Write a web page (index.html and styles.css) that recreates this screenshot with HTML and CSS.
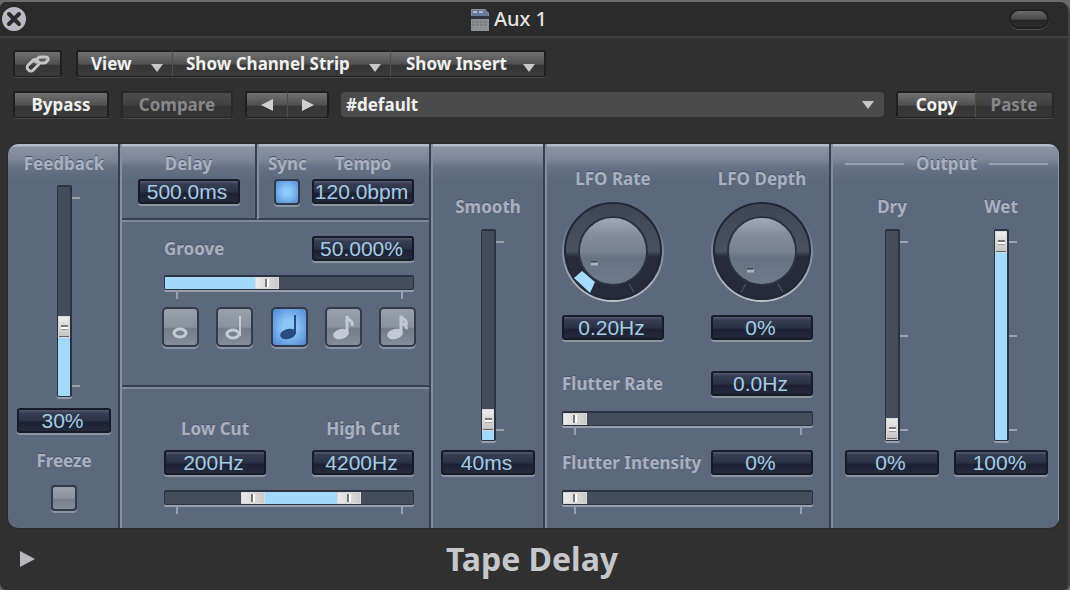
FILE: index.html
```html
<!DOCTYPE html>
<html lang="en">
  <head>
    <meta charset="UTF-8" />
    <meta name="viewport" content="width=device-width, initial-scale=1.0" />
    <title>Aux 1 - Tape Delay</title>
    <link rel="stylesheet" href="styles.css">
  </head>
  <body>
    <main class="window">
      <header class="titlebar">
        <button class="close" type="button" aria-label="Close">
          <svg width="26" height="26" viewBox="0 0 26 26">
            <circle cx="13" cy="13" r="12" fill="#b9bac4" />
            <path d="M8 8l10 10M18 8L8 18" stroke="#2b2b2b" stroke-width="4" stroke-linecap="round" />
          </svg>
        </button>
        <h1 class="title">
          <svg width="18" height="23" viewBox="0 0 18 23">
            <path d="M0 1h14l4 4v18H0z" fill="#8d8f93" />
            <path d="M1 2h13l3 3v3H1z" fill="#66799a" />
            <path d="M2 3h4v2H2zM8 3h4v2H8z" fill="#a9b9d0" />
            <path d="M0 8h18v3H0z" fill="#30343c" />
            <path d="M1 14h16M1 17h16" stroke="#6a6c70" stroke-width="1" stroke-dasharray="3 1" />
          </svg>
          Aux 1
        </h1>
        <button class="pill" type="button" aria-label="Toggle toolbar"></button>
      </header>

      <div class="toolbar">
        <div class="row">
          <button class="btn link" type="button" aria-label="Link">
            <svg width="26" height="20" viewBox="0 0 26 20" fill="none" stroke="#c4c4c4" stroke-width="3">
              <rect x="2" y="8" width="13" height="7" rx="3" transform="rotate(-45 8 12)" />
              <path d="M10 9l3-5q1-1 3-1h4q4 0 3 3l-1 1q-1 2-3 2h-5" />
            </svg>
          </button>
          <div class="group">
            <button class="btn menu view" type="button" aria-haspopup="menu">View <i class="down"></i></button>
            <button class="btn menu strip" type="button" aria-haspopup="menu">Show Channel Strip <i class="down"></i></button>
            <button class="btn menu insert" type="button" aria-haspopup="menu">Show Insert <i class="down"></i></button>
          </div>
        </div>
        <div class="row">
          <button class="btn bypass" type="button">Bypass</button>
          <button class="btn compare" type="button" disabled>Compare</button>
          <div class="group">
            <button class="btn arrow" type="button" aria-label="Previous setting"><i class="left"></i></button>
            <button class="btn arrow" type="button" aria-label="Next setting"><i class="right"></i></button>
          </div>
          <div class="preset">
            <select aria-label="Setting">
              <option>#default</option>
            </select>
            <i class="down"></i>
          </div>
          <div class="group">
            <button class="btn copy" type="button">Copy</button>
            <button class="btn copy" type="button" disabled>Paste</button>
          </div>
        </div>
      </div>

      <section class="panel">
        <div class="col feedback">
          <label for="feedback">Feedback</label>
          <div class="fader">
            <input type="range" aria-label="Feedback level" value="31" style="--v: 31%" />
            <div class="ticks"><i></i><i></i></div>
          </div>
          <input class="value" type="text" id="feedback" value="30%" />
          <label class="freeze" for="freeze">Freeze</label>
          <input class="check" type="checkbox" id="freeze" />
        </div>

        <div class="col timing">
          <div class="cell delay">
            <label for="delay">Delay</label>
            <input class="value" type="text" id="delay" value="500.0ms" />
          </div>
          <div class="cell tempo">
            <div class="field">
              <label for="sync">Sync</label>
              <input class="check" type="checkbox" id="sync" checked />
            </div>
            <div class="field">
              <label for="tempo">Tempo</label>
              <input class="value" type="text" id="tempo" value="120.0bpm" />
            </div>
          </div>
          <div class="cell groove">
            <div class="line">
              <label for="groove">Groove</label>
              <input class="value" type="text" id="groove" value="50.000%" />
            </div>
            <div class="slider">
              <input type="range" aria-label="Groove amount" value="40" style="--v: 40%" />
            </div>
            <div class="ticks"><i></i><i></i></div>
            <div class="notes">
              <label class="note">
                <input type="radio" name="note" aria-label="Whole note" />
                <svg viewBox="2 1 33 36">
                  <ellipse cx="18" cy="25" rx="6" ry="4" fill="none" stroke="currentColor" stroke-width="3" />
                </svg>
              </label>
              <label class="note">
                <input type="radio" name="note" aria-label="Half note" />
                <svg viewBox="2 1 33 36">
                  <ellipse cx="17" cy="26" rx="6" ry="4" fill="none" stroke="currentColor" stroke-width="3" />
                  <path d="M24 28V8" stroke="currentColor" stroke-width="2" />
                </svg>
              </label>
              <label class="note">
                <input type="radio" name="note" aria-label="Quarter note" checked />
                <svg viewBox="2 1 33 36">
                  <ellipse cx="17" cy="26" rx="8" ry="5" fill="currentColor" transform="rotate(-15 17 26)" />
                  <path d="M24 26V7" stroke="currentColor" stroke-width="2" />
                </svg>
              </label>
              <label class="note">
                <input type="radio" name="note" aria-label="Eighth note" />
                <svg viewBox="2 1 33 36">
                  <ellipse cx="16" cy="26" rx="8" ry="5" fill="currentColor" transform="rotate(-15 16 26)" />
                  <path d="M22 25V8q1 4 4 5 2 2 1 5" fill="none" stroke="currentColor" stroke-width="3" />
                </svg>
              </label>
              <label class="note">
                <input type="radio" name="note" aria-label="Sixteenth note" />
                <svg viewBox="2 1 33 36">
                  <ellipse cx="16" cy="26" rx="8" ry="5" fill="currentColor" transform="rotate(-15 16 26)" />
                  <path d="M22 25V8q1 3 4 4 2 2 1 5M22 13q1 3 4 4 2 2 1 4" fill="none" stroke="currentColor" stroke-width="3" />
                </svg>
              </label>
            </div>
          </div>
          <div class="cell filter">
            <div class="line">
              <div class="field">
                <label for="low">Low Cut</label>
                <input class="value" type="text" id="low" value="200Hz" />
              </div>
              <div class="field">
                <label for="high">High Cut</label>
                <input class="value" type="text" id="high" value="4200Hz" />
              </div>
            </div>
            <div class="slider double" style="--a: 35%; --b: 74%">
              <input type="range" aria-label="Low cut frequency" value="34" />
              <input type="range" aria-label="High cut frequency" value="77" />
            </div>
            <div class="ticks"><i></i><i></i></div>
          </div>
        </div>

        <div class="col smooth">
          <label for="smooth">Smooth</label>
          <div class="fader">
            <input type="range" aria-label="Smooth time" value="5" style="--v: 6%" />
            <div class="ticks"><i></i><i></i></div>
          </div>
          <input class="value" type="text" id="smooth" value="40ms" />
        </div>

        <div class="col lfo">
          <div class="line">
            <div class="field">
              <label for="rate">LFO Rate</label>
              <svg class="knob" width="102" height="102" viewBox="-51 -51 102 102">
                <defs>
                  <linearGradient id="ring" x1="0" y1="0" x2="0" y2="1">
                    <stop offset="0" stop-color="#3f4653" />
                    <stop offset="0.5" stop-color="#4a5260" />
                    <stop offset="0.56" stop-color="#262a3a" />
                    <stop offset="1" stop-color="#262b3b" />
                  </linearGradient>
                  <linearGradient id="cap" x1="0" y1="0" x2="0" y2="1">
                    <stop offset="0" stop-color="#a4acb8" />
                    <stop offset="0.25" stop-color="#858e9c" />
                    <stop offset="0.52" stop-color="#76808f" />
                    <stop offset="0.6" stop-color="#677283" />
                    <stop offset="1" stop-color="#6f7a8a" />
                  </linearGradient>
                  <linearGradient id="rim" x1="0" y1="0" x2="0" y2="1">
                    <stop offset="0.2" stop-color="#5c687c" />
                    <stop offset="1" stop-color="#c0c3ca" />
                  </linearGradient>
                </defs>
                <circle r="51" fill="url(#rim)" />
                <circle r="48" fill="url(#ring)" stroke="#202737" stroke-width="2" />
                <path d="M-39 27L-31 20L-18 31L-23 42z" fill="#a5dafb" />
                <path d="M16 33l5 8" stroke="#59616f" stroke-width="1" />
                <circle r="34" fill="url(#cap)" stroke="#2b3342" stroke-width="2" />
                <path d="M-22 11h6" stroke="#39414f" stroke-width="2" />
                <path d="M-22 13h7" stroke="#adb5c1" stroke-width="3" />
              </svg>
              <input class="value" type="text" id="rate" value="0.20Hz" />
            </div>
            <div class="field">
              <label for="depth">LFO Depth</label>
              <svg class="knob" width="102" height="102" viewBox="-51 -51 102 102">
                <circle r="51" fill="url(#rim)" />
                <circle r="48" fill="url(#ring)" stroke="#202737" stroke-width="2" />
                <path d="M16 33l5 8M-16 33l-5 8" stroke="#59616f" stroke-width="1" />
                <circle r="34" fill="url(#cap)" stroke="#2b3342" stroke-width="2" />
                <path d="M-15 18h6" stroke="#39414f" stroke-width="2" />
                <path d="M-15 20h7" stroke="#adb5c1" stroke-width="3" />
              </svg>
              <input class="value" type="text" id="depth" value="0%" />
            </div>
          </div>
          <div class="line flutter">
            <label for="flutter-rate">Flutter Rate</label>
            <input class="value" type="text" id="flutter-rate" value="0.0Hz" />
          </div>
          <div class="slider">
            <input type="range" aria-label="Flutter rate amount" value="0" style="--v: 0%" />
          </div>
          <div class="ticks"><i></i><i></i></div>
          <div class="line intensity">
            <label for="intensity">Flutter Intensity</label>
            <input class="value" type="text" id="intensity" value="0%" />
          </div>
          <div class="slider">
            <input type="range" aria-label="Flutter intensity amount" value="0" style="--v: 0%" />
          </div>
          <div class="ticks"><i></i><i></i></div>
        </div>

        <div class="col output">
          <h2>Output</h2>
          <div class="line">
            <div class="field">
              <label for="dry">Dry</label>
              <div class="fader">
                <input type="range" aria-label="Dry level" value="0" style="--v: 0%" />
                <div class="ticks"><i></i><i></i><i></i></div>
              </div>
              <input class="value" type="text" id="dry" value="0%" />
            </div>
            <div class="field">
              <label for="wet">Wet</label>
              <div class="fader">
                <input type="range" aria-label="Wet level" value="100" style="--v: 100%" />
                <div class="ticks"><i></i><i></i><i></i></div>
              </div>
              <input class="value" type="text" id="wet" value="100%" />
            </div>
          </div>
        </div>
      </section>

      <footer class="footer">
        <button class="disclose" type="button" aria-label="Show more controls"><i class="right"></i></button>
        <p class="name">Tape Delay</p>
      </footer>
    </main>
  </body>
</html>
```
FILE: styles.css
```css
* {
  box-sizing: border-box;
}

body {
  margin: 0;
  padding-top: 2px;
  background: #6b6b6b;
  font-family: "Noto Sans", "Open Sans", sans-serif;
  font-size: 18px;
  line-height: 24px;
}

button,
input,
select {
  margin: 0;
  padding: 0;
  border: none;
  font: inherit;
}

svg {
  display: block;
}

.window {
  display: flex;
  flex-direction: column;
  min-height: calc(100vh - 2px);
  background: #303030;
  border-right: 2px solid #444;
  border-radius: 6px 10px 6px 6px;
  overflow: hidden;
}

/* title bar */
.titlebar {
  display: grid;
  grid-template-columns: 1fr auto 1fr;
  align-items: center;
  height: 36px;
  padding: 0 19px 0 1px;
  background: #2b2b2b;
  border-bottom: 2px solid #404040;
}

.close {
  justify-self: start;
  background: none;
}

.title {
  display: flex;
  align-items: center;
  gap: 5px;
  margin: 0;
  padding-right: 32px;
  color: #e4e4e4;
  font-size: 20px;
  font-weight: 500;
}

.pill {
  justify-self: end;
  width: 40px;
  height: 20px;
  border: 2px solid #202020;
  border-radius: 10px;
  background: linear-gradient(#696969, #4a4a4a 50%, #252525 60%, #2c2c2c);
  box-shadow: 0 1px 0 #505050;
}

/* toolbar */
.toolbar {
  display: flex;
  flex-direction: column;
  gap: 14px;
  padding: 12px 14px 26px 13px;
}

.row {
  display: flex;
  align-items: center;
  gap: 12px;
}

.link + .group {
  margin-left: 2px;
}

.group {
  display: flex;
}

.btn {
  display: flex;
  align-items: center;
  justify-content: center;
  height: 27px;
  border: 2px solid #1f1f1f;
  border-bottom-width: 1px;
  border-radius: 3px;
  background: linear-gradient(#717171, #505050 50%, #363636 55%, #3a3a3a);
  box-shadow: 0 1px 0 #484848;
  color: #f0f0f0;
  font-size: 17px;
  font-weight: 700;
}

.btn:disabled {
  background: linear-gradient(#4c4c4c, #414141 50%, #333 55%, #363636);
  border-color: #292929;
  color: #86878b;
}

.group .btn + .btn {
  border-left: 1px solid #4d4d4d;
  border-radius: 0 3px 3px 0;
}

.group .btn:first-child {
  border-right: none;
  border-radius: 3px 0 0 3px;
}

.group .btn:not(:last-child) {
  border-right: none;
  border-top-right-radius: 0;
  border-bottom-right-radius: 0;
}

.link {
  width: 49px;
}

.menu {
  justify-content: space-between;
  padding: 0 9px 0 13px;
}

.view {
  width: 96px;
}

.strip {
  width: 218px;
}

.insert {
  width: 156px;
  padding-left: 15px;
}

.bypass {
  width: 96px;
}

.compare {
  width: 112px;
}

.arrow {
  width: 42px;
}

.copy {
  width: 79px;
}

.down,
.left,
.right {
  width: 0;
  height: 0;
  border: 6px solid transparent;
}

.down {
  border-width: 8px 6px 0;
  border-top-color: #c8c8c8;
}

.menu .down {
  margin-top: 8px;
}

.left {
  border-width: 6px 12px 6px 0;
  border-right-color: #d0d0d0;
}

.right {
  border-width: 6px 0 6px 12px;
  border-left-color: #d0d0d0;
}

.preset {
  position: relative;
  flex: 1;
}

.preset select {
  display: block;
  width: 100%;
  height: 25px;
  padding: 0 24px 0 5px;
  appearance: none;
  border-radius: 4px;
  background: #4b4b4b;
  color: #f0f0f0;
  font-size: 17px;
  font-weight: 700;
}

.preset .down {
  position: absolute;
  top: 9px;
  right: 10px;
  pointer-events: none;
}

/* plug-in panel */
.panel {
  display: grid;
  grid-template-columns: 112fr 311fr 114fr 286fr 228fr;
  margin: 0 9px 0 8px;
  border-radius: 10px;
  background: linear-gradient(#b4bbc8 2px, #8a93a3 3px, #7c8697 16px, #677286 23px, #5c687c 36px);
  box-shadow: 0 0 0 1px #252a33;
  overflow: hidden;
}

.panel label,
.panel h2 {
  margin: 0;
  color: #a9b1c1;
  font-size: 17px;
  font-weight: 700;
  line-height: 24px;
  text-shadow: 0 -1px 0 #4a5466;
  white-space: nowrap;
}

.col {
  min-width: 0;
  border-left: 2px solid #8490a1;
  border-right: 2px solid #353f50;
}

.col:first-child {
  border-left: none;
}

.col:last-child {
  border-right: 1px solid #8f99aa;
}

.feedback,
.smooth,
.field {
  display: flex;
  flex-direction: column;
  align-items: center;
}

.line {
  display: flex;
  justify-content: space-between;
  align-items: center;
}

.value {
  width: 102px;
  height: 25px;
  padding: 1px 3px 0 0;
  border: 2px solid #161b27;
  border-radius: 3px;
  background: linear-gradient(#555c70, #363d52 3px, #2c3246 50%, #1c2033 60%, #252a3d);
  box-shadow: 0 2px 0 #8d95a3;
  color: #a4cce4;
  font-family: "Liberation Sans", Arial, sans-serif;
  font-size: 21px;
  line-height: 20px;
  text-align: center;
}

.feedback .value,
.smooth .value,
.output .value {
  width: 94px;
}

.check {
  width: 26px;
  height: 26px;
  appearance: none;
  border: 2px solid #323b4a;
  border-radius: 4px;
  background: linear-gradient(#9aa2ae, #8a929f 50%, #747e8c 55%, #858e9b);
  box-shadow: 0 2px 0 #8d95a3;
}

.check:checked {
  background: radial-gradient(#8ccdfc 20%, #5f97dc 85%);
}

/* sliders */
input[type="range"] {
  display: block;
  width: 100%;
  height: 15px;
  appearance: none;
  border: 2px solid #2b3341;
  border-width: 2px 1px 1px;
  border-radius: 2px;
  background: linear-gradient(90deg, #a3dafc var(--v), #434d5b var(--v));
  box-shadow: 0 2px 0 #98a0ad;
}

input[type="range"]::-webkit-slider-thumb {
  appearance: none;
  width: 24px;
  height: 12px;
  background:
    linear-gradient(90deg, transparent 10px, #777 10px, #777 12px, #fff 12px, #fff 14px, transparent 14px) 0 2px / 24px 8px no-repeat,
    linear-gradient(90deg, #ececec, #c9c9c9);
  box-shadow: inset 0 0 0 1px #d8d8d8;
}

.ticks {
  display: flex;
  justify-content: space-between;
  height: 9px;
  padding: 0 11px 0 12px;
}

.ticks i {
  width: 2px;
  height: 9px;
  background: #98a0ad;
}

.fader {
  display: grid;
  grid-template-columns: 1fr 15px 1fr;
  width: 100%;
}

.fader input[type="range"] {
  grid-column: 2;
  width: 15px;
  height: 212px;
  writing-mode: vertical-lr;
  direction: rtl;
  border-width: 2px 2px 1px 1px;
  background: linear-gradient(0deg, #a3dafc var(--v), #434d5b var(--v));
}

.fader input[type="range"]::-webkit-slider-thumb {
  width: 12px;
  height: 22px;
  background:
    linear-gradient(transparent 9px, #777 9px, #777 11px, #fff 11px, #fff 13px, #999 13px, #999 14px, transparent 14px) 3px 0 / 7px 22px no-repeat,
    linear-gradient(#eee, #c6c6c6 20px, #666 20px);
}

.fader .ticks {
  flex-direction: column;
  height: 212px;
  padding: 12px 0 10px;
}

.fader .ticks i {
  width: 8px;
  height: 2px;
}

.double {
  position: relative;
  height: 15px;
  border: 2px solid #2b3341;
  border-width: 2px 1px 1px;
  border-radius: 2px;
  background: linear-gradient(90deg, #434d5b var(--a), #a3dafc var(--a), #a3dafc var(--b), #434d5b var(--b));
  box-shadow: 0 2px 0 #98a0ad;
}

.double input[type="range"] {
  position: absolute;
  inset: 0;
  height: 12px;
  border: none;
  background: none;
  box-shadow: none;
  pointer-events: none;
}

.double input[type="range"]::-webkit-slider-thumb {
  pointer-events: auto;
}

/* feedback */
.feedback {
  padding: 8px 0 0 2px;
}

.feedback .fader {
  margin: 9px 0 11px;
}

.feedback .freeze {
  margin: 16px 0 12px;
}

/* delay, tempo, groove and filters */
.timing {
  display: grid;
  grid-template-columns: 135fr 172fr;
  grid-template-rows: 76px 167px 141px;
}

.cell {
  border-bottom: 2px solid #353f50;
}

.delay,
.tempo {
  padding-top: 8px;
}

.delay {
  display: flex;
  flex-direction: column;
  align-items: center;
  gap: 3px;
  border-right: 2px solid #353f50;
}

.tempo {
  display: flex;
  justify-content: space-between;
  padding-left: 9px;
  padding-right: 15px;
  border-left: 2px solid #8490a1;
}

.tempo .field {
  gap: 3px;
}

.groove,
.filter {
  grid-column: 1 / 3;
  padding: 14px 15px 0 42px;
  border-top: 2px solid #7e8a9c;
}

.groove .slider {
  margin-top: 14px;
}

.notes {
  display: flex;
  justify-content: space-between;
  margin: 8px -2px 0;
}

.note {
  position: relative;
  border: 2px solid #323b4a;
  border-radius: 5px;
  background: linear-gradient(#9aa1ad, #8a929f 50%, #727b89 55%, #858d9a);
  box-shadow: 0 2px 0 #8d95a3;
}

.note svg {
  width: 33px;
  height: 36px;
}

.note input {
  position: absolute;
  inset: 0;
  appearance: none;
}

.panel .note {
  color: #c3cad3;
  line-height: 0;
}

.panel .note:has(:checked) {
  background: radial-gradient(#8ac6f8 30%, #5b92d8 85%);
  color: #274a80;
}

.filter {
  padding-top: 28px;
  border-bottom: none;
}

.filter .field {
  gap: 9px;
}

.filter .slider {
  margin-top: 15px;
}

/* smooth */
.smooth {
  padding-top: 51px;
}

.smooth .fader,
.output .fader {
  margin: 10px 0 9px;
}

/* lfo and flutter */
.lfo {
  padding: 23px 16px 0 15px;
}

.lfo .knob {
  margin: 9px 0 13px;
}

.flutter {
  margin-top: 31px;
}

.lfo .slider {
  margin-top: 15px;
}

.intensity {
  margin-top: 15px;
}

/* output */
.output {
  padding: 8px 10px 0 12px;
}

.panel .output h2 {
  display: flex;
  align-items: center;
  gap: 12px;
}

.output h2::before,
.output h2::after {
  content: "";
  flex: 1;
  height: 2px;
  background: #98a0ad;
}

.output .line {
  margin-top: 19px;
}

/* footer */
.footer {
  display: grid;
  grid-template-columns: 1fr auto 1fr;
  align-items: center;
  flex: 1;
  min-height: 60px;
  padding: 0 24px 0 20px;
}

.disclose {
  justify-self: start;
  background: none;
}

.disclose .right {
  display: block;
  border-width: 8px 0 8px 15px;
  border-left-color: #b8b8bf;
}

.name {
  margin: 0;
  color: #c6c7cc;
  font-size: 32px;
  font-weight: 700;
  line-height: 40px;
}
```
